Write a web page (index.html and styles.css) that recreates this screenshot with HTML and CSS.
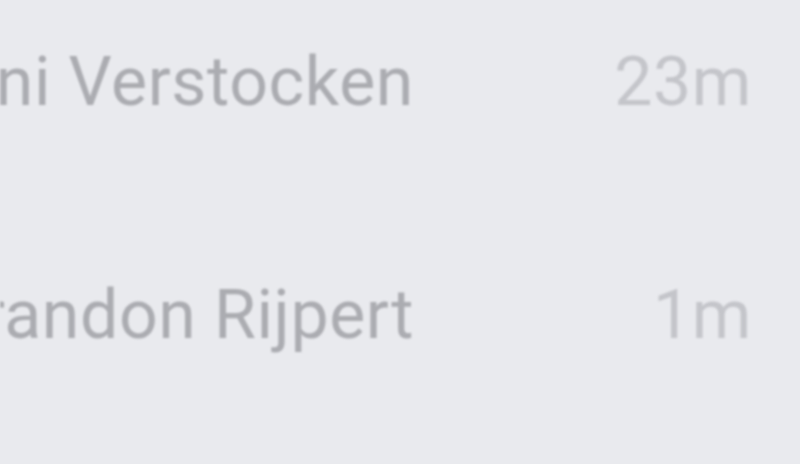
FILE: index.html
```html
<!DOCTYPE html>
<html>
<head>
<meta charset="utf-8">
<link rel="stylesheet" href="styles.css">
</head>
<body>
<div class="list">
  <div class="row">
    <div class="name"><span>Jasmini Verstocken</span></div>
    <div class="time">23m</div>
  </div>
  <div class="row">
    <div class="name"><span>Brandon Rijpert</span></div>
    <div class="time">1m</div>
  </div>
</div>
</body>
</html>
```
FILE: styles.css
```css
html, body {
  margin: 0;
  padding: 0;
  background: #e9eaee;
  width: 800px;
  height: 464px;
  overflow: hidden;
}
.list {
  display: flex;
  flex-direction: column;
  padding-top: 42px;
  gap: 153px;
  font-family: Roboto, "Liberation Sans", sans-serif;
  font-size: 68px;
  line-height: 80px;
  letter-spacing: 0.6px;
  color: #abacb1;
  filter: blur(1.3px);
}
.row {
  display: flex;
  align-items: flex-start;
  height: 80px;
}
.name {
  width: 414px;
  display: flex;
  justify-content: flex-end;
  overflow: hidden;
  white-space: nowrap;
}
.time {
  width: 338px;
  text-align: right;
  color: #c4c5ca;
}
```
